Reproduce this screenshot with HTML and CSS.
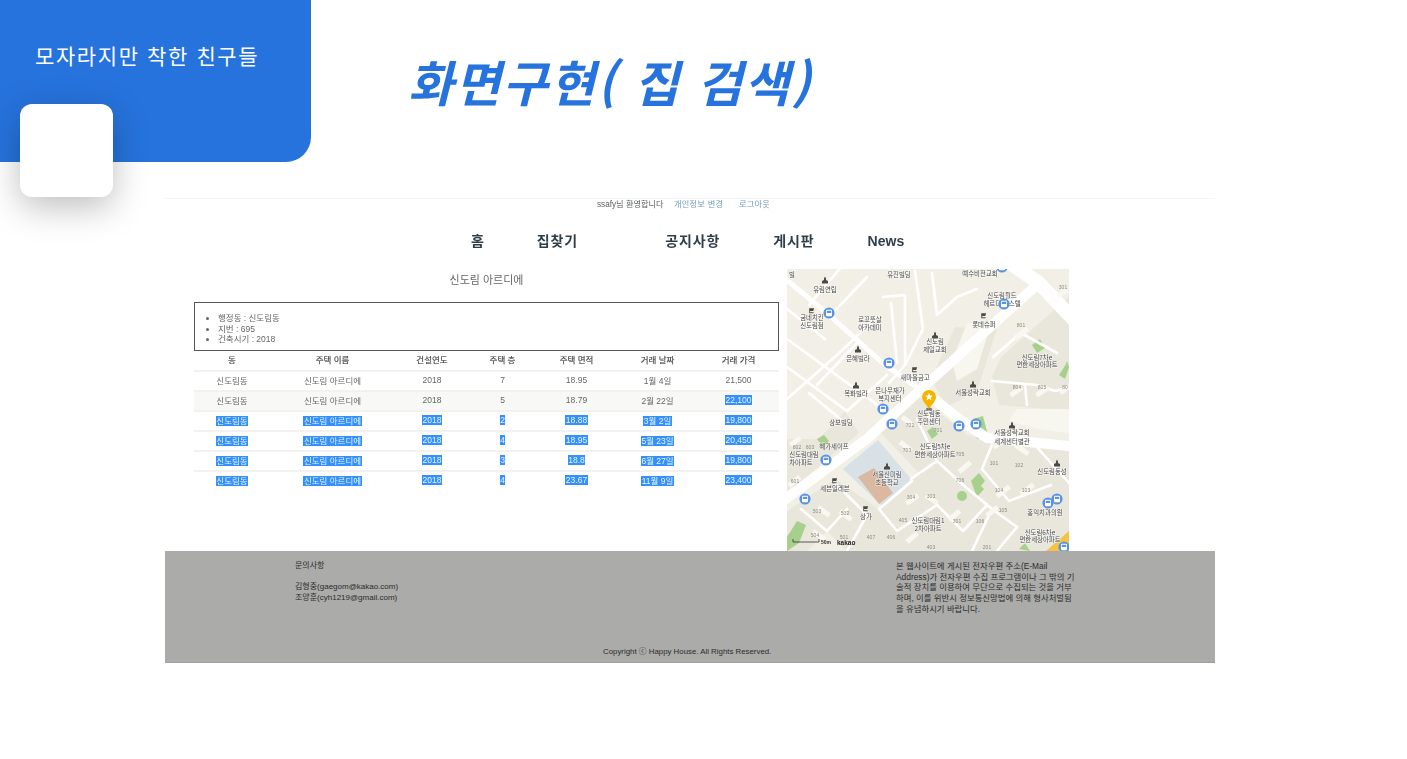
FILE: index.html
```html
<!DOCTYPE html>
<html lang="ko">
<head>
<meta charset="utf-8">
<title>화면구현( 집 검색)</title>
<link rel="stylesheet" href="styles.css">
</head>
<body>
<header class="slide-head">
  <div class="panel">
    <p class="team">모자라지만 착한 친구들</p>
    <div class="card"></div>
  </div>
  <h1 class="slide-title">화면구현( 집 검색)</h1>
</header>
<main class="shot">
  <div class="welcome">
    <span class="who">ssafy님 환영합니다</span>
    <a class="link">개인정보 변경</a>
    <a class="link">로그아웃</a>
  </div>
  <nav class="nav">
    <span class="ko">홈</span><span class="ko wide">집찾기</span><span class="ko">공지사항</span><span class="ko">게시판</span><span>News</span>
  </nav>
  <div class="content">
    <section class="detail">
      <h2 class="apt">신도림 아르디에</h2>
      <div class="info">
        <ul>
          <li>행정동 : 신도림동</li>
          <li>지번 : 695</li>
          <li>건축시기 : 2018</li>
        </ul>
      </div>
      <table class="deals">
        <thead>
          <tr><th>동</th><th>주택 이름</th><th>건설연도</th><th>주택 층</th><th>주택 면적</th><th>거래 날짜</th><th>거래 가격</th></tr>
        </thead>
        <tbody>
          <tr><td>신도림동</td><td>신도림 아르디에</td><td>2018</td><td>7</td><td>18.95</td><td>1월 4일</td><td>21,500</td></tr>
          <tr class="alt"><td>신도림동</td><td>신도림 아르디에</td><td>2018</td><td>5</td><td>18.79</td><td>2월 22일</td><td><mark>22,100</mark></td></tr>
          <tr><td><mark>신도림동</mark></td><td><mark>신도림 아르디에</mark></td><td><mark>2018</mark></td><td><mark>2</mark></td><td><mark>18.88</mark></td><td><mark>3월 2일</mark></td><td><mark>19,800</mark></td></tr>
          <tr><td><mark>신도림동</mark></td><td><mark>신도림 아르디에</mark></td><td><mark>2018</mark></td><td><mark>4</mark></td><td><mark>18.95</mark></td><td><mark>5월 23일</mark></td><td><mark>20,450</mark></td></tr>
          <tr><td><mark>신도림동</mark></td><td><mark>신도림 아르디에</mark></td><td><mark>2018</mark></td><td><mark>3</mark></td><td><mark>18.8</mark></td><td><mark>6월 27일</mark></td><td><mark>19,800</mark></td></tr>
          <tr><td><mark>신도림동</mark></td><td><mark>신도림 아르디에</mark></td><td><mark>2018</mark></td><td><mark>4</mark></td><td><mark>23.67</mark></td><td><mark>11월 9일</mark></td><td><mark>23,400</mark></td></tr>
        </tbody>
      </table>
    </section>
    <svg class="map" viewBox="0 0 282 282" width="282" height="282" xmlns="http://www.w3.org/2000/svg">
      <defs>
        <symbol id="bus" viewBox="0 0 12 12" overflow="visible">
          <circle cx="6" cy="6" r="5.6" fill="#5b93e3"/>
          <rect x="3" y="2.8" width="6" height="6.4" rx="1" fill="#fff"/>
          <rect x="3.8" y="3.8" width="4.4" height="2.2" fill="#5b93e3"/>
        </symbol>
        <symbol id="church" viewBox="0 0 8 8">
          <path d="M4 0.6 L5 2.6 L5 4 L7 5 L7 7.4 L1 7.4 L1 5 L3 4 L3 2.6 Z" fill="#4a4a44"/>
        </symbol>
        <symbol id="cart" viewBox="0 0 8 8">
          <path d="M1 1.5 H7 L6 4.6 H2.4 L2.4 6 H6.4 V7 H1.4 V1.5 Z" fill="#4a4a44"/>
        </symbol>
      </defs>
      <rect class="m-base" width="282" height="282"/>

      <!-- apartment blocks -->
      <path class="m-apt" d="M282 28 L214 88 L205 108 L212 136 L282 142 Z"/>
      <path class="m-apt" d="M160 138 L190 122 L210 60 L168 58 L144 110 Z"/>
      <path class="m-light" d="M165 92 L180 54 L203 58 L190 100 L170 112 Z"/>
      <path class="m-apt" d="M90 160 L130 126 L180 166 L282 176 L282 282 L60 282 L40 262 L20 282 L0 282 L0 242 L48 210 L92 240 L132 204 Z"/>
      <path class="m-apt" d="M0 170 L32 170 L58 142 L72 164 L40 190 L10 216 L0 222 Z"/>
      <path class="m-light" d="M282 140 L230 140 L222 152 L250 160 L282 164 Z"/>

      <!-- school -->
      <path class="m-school" d="M91 171 L124 210 L95 237 L56 200 Z"/>
      <path class="m-field" d="M71 208 L87 199 L106 224 L92 235 Z"/>

      <!-- green -->
      <path class="m-green" d="M186 150 L196 147 L201 166 L190 170 Z"/>
      <path class="m-green" d="M140 162 L146 158 L151 165 L145 170 Z"/>
      <path class="m-green" d="M30 170 L37 166 L42 172 L36 178 Z"/>
      <path class="m-green" d="M184 212 L192 204 L198 212 L194 217 L197 220 L190 228 Z"/>
      <circle class="m-green" cx="175" cy="227" r="5"/>
      <path class="m-green" d="M0 268 L10 252 L19 256 L12 274 L0 282 Z"/>
      <path class="m-green" d="M245 76 L253 70 L258 79 L250 84 Z"/>
      <path class="m-green" d="M280 35 L275 42 L282 48 Z"/>
      <path class="m-green" d="M272 106 C276 100 279 96 280 92 L282 98 L278 110 Z"/>
      <path class="m-green" d="M232 280 L238 274 L243 282 Z"/>
      <path class="m-yellow" d="M282 262 L282 282 L259 282 Z"/>

      <!-- roads -->
      <g class="m-road">
        <path class="r-main" d="M252 14 L131 123 L81 169 L-4 232"/>
        <path class="r-main" d="M138 123 L172 150 L200 169 L282 177"/>
        <path class="r-wide" d="M226 -4 L252 14 L286 50"/>
        <path class="r-mid" d="M-4 8 L42 46 L98 96 L138 124"/>
        <path class="r-thin" d="M0 98 L60 142"/>
        <path class="r-thin" d="M0 70 L96 140"/>
        <path class="r-thin" d="M0 40 L38 70"/>
        <path class="r-thin" d="M56 -4 L22 36"/>
        <path class="r-thin" d="M96 28 L118 26 L118 96"/>
        <path class="r-thin" d="M104 34 L110 94"/>
        <path class="r-thin" d="M128 2 L136 60 L118 96 L102 114"/>
        <path class="r-thin" d="M44 46 L80 8"/>
        <path class="r-thin" d="M50 86 L88 50"/>
        <path class="r-thin" d="M30 116 L70 74"/>
        <path class="r-thin" d="M0 130 L50 86"/>
        <path class="r-thin" d="M60 142 L100 106"/>
        <path class="r-thin" d="M22 124 L58 154"/>
        <path class="r-thin" d="M145 4 L150 46 L170 28 L190 20"/>
        <path class="r-thin" d="M206 88 L234 64 L270 84"/>
        <path class="r-thin" d="M205 112 L250 116 L268 122 L282 118"/>
        <path class="r-thin" d="M238 116 L240 136"/>
        <path class="r-thin" d="M124 210 L150 192 L175 215 L205 240 L230 258"/>
        <path class="r-thin" d="M205 176 L195 200 L222 232 L264 216"/>
        <path class="r-thin" d="M248 176 L282 214"/>
        <path class="r-thin" d="M48 214 L80 246 L60 282"/>
        <path class="r-thin" d="M125 212 L92 240 L110 262 L150 236 L176 262 L200 236"/>
        <path class="r-thin" d="M205 240 L185 282"/>
        <path class="r-thin" d="M230 258 L210 282"/>
        <path class="r-thin" d="M14 240 L40 262 L60 240"/>
        <path class="r-thin" d="M150 192 L130 150"/>
      </g>

      <!-- apartment buildings -->
      <g class="m-bld">
        <rect x="270" y="22" width="11" height="5" transform="rotate(-35 275 24)"/>
        <rect x="226" y="62" width="16" height="5" transform="rotate(-38 234 64)"/>
        <rect x="222" y="120" width="14" height="5" transform="rotate(-35 229 122)"/>
        <rect x="248" y="120" width="14" height="5" transform="rotate(-35 255 122)"/>
        <rect x="272" y="118" width="12" height="5" transform="rotate(-35 278 120)"/>
        <rect x="114" y="150" width="14" height="5" transform="rotate(38 121 152)"/>
        <rect x="140" y="148" width="14" height="5" transform="rotate(38 147 150)"/>
        <rect x="112" y="175" width="14" height="5" transform="rotate(38 119 177)"/>
        <rect x="205" y="172" width="15" height="5" transform="rotate(-35 212 174)"/>
        <rect x="228" y="178" width="15" height="5" transform="rotate(35 235 180)"/>
        <rect x="170" y="196" width="15" height="5" transform="rotate(-40 177 198)"/>
        <rect x="208" y="220" width="16" height="5" transform="rotate(-38 216 222)"/>
        <rect x="232" y="218" width="16" height="5" transform="rotate(-38 240 220)"/>
        <rect x="118" y="228" width="14" height="5" transform="rotate(-35 125 230)"/>
        <rect x="138" y="228" width="14" height="5" transform="rotate(35 145 230)"/>
        <rect x="160" y="244" width="14" height="5" transform="rotate(-38 167 246)"/>
        <rect x="198" y="240" width="14" height="5" transform="rotate(-38 205 242)"/>
        <rect x="30" y="240" width="14" height="5" transform="rotate(35 37 242)"/>
        <rect x="52" y="244" width="14" height="5" transform="rotate(35 59 246)"/>
        <rect x="25" y="264" width="14" height="5" transform="rotate(35 32 266)"/>
        <rect x="118" y="266" width="14" height="5" transform="rotate(-40 125 268)"/>
        <rect x="2" y="170" width="12" height="5" transform="rotate(-35 8 172)"/>
        <rect x="0" y="210" width="14" height="5" transform="rotate(-38 7 212)"/>
      </g>

      <!-- POI icons -->
      <use href="#church" x="34" y="7" width="8" height="8"/>
      <use href="#church" x="144" y="62" width="8" height="8"/>
      <use href="#church" x="67" y="76" width="8" height="8"/>
      <use href="#church" x="65" y="112" width="8" height="8"/>
      <use href="#church" x="182" y="111" width="8" height="8"/>
      <use href="#church" x="221" y="152" width="8" height="8"/>
      <use href="#church" x="96" y="193" width="8" height="8"/>
      <use href="#church" x="266" y="190" width="8" height="8"/>
      <use href="#cart" x="193" y="43" width="7" height="7"/>
      <use href="#cart" x="44" y="208" width="7" height="7"/>
      <use href="#cart" x="75" y="236" width="7" height="7"/>
      <use href="#cart" x="21" y="38" width="7" height="7"/>
      <use href="#cart" x="124" y="97" width="7" height="7"/>

      <!-- labels -->
      <g class="m-label">
        <text x="112" y="8">유진빌딩</text>
        <text x="193" y="7">예수비전교회</text>
        <text x="5" y="8">빌</text>
        <text x="38" y="23">유림연립</text>
        <text x="25" y="51">굼네치킨</text><text x="25" y="59">신도림점</text>
        <text x="83" y="53">로꼬뜻살</text><text x="83" y="61">아카데미</text>
        <text x="215" y="29">신도림월드</text><text x="215" y="37">헤르디 피스텔</text>
        <text x="197" y="58">롯데슈퍼</text>
        <text x="148" y="75">신도림</text><text x="148" y="83">제일교회</text>
        <text x="71" y="92">은혜빌라</text>
        <text x="128" y="111">새마을금고</text>
        <text x="69" y="127">목화빌라</text>
        <text x="103" y="124">은나무재가</text><text x="103" y="132">복지센터</text>
        <text x="186" y="126">서울성락교회</text>
        <text x="250" y="91">신도림7차e</text><text x="250" y="98">편한세상아파트</text>
        <text x="54" y="156">상보빌딩</text>
        <text x="142" y="147">신도림동</text><text x="142" y="155">주민센터</text>
        <text x="225" y="166">서울성락교회</text><text x="225" y="175">세계센터별관</text>
        <text x="47" y="180">혜가세이프</text>
        <text x="148" y="180">신도림5차e</text><text x="148" y="188">편한세상아파트</text>
        <text x="17" y="188">신도림대림</text><text x="14" y="196">차아파트</text>
        <text class="m-school-t" x="100" y="208">서울신미림</text><text class="m-school-t" x="100" y="216">초등학교</text>
        <text x="48" y="222">세븐일레븐</text>
        <text x="79" y="250">상가</text>
        <text x="265" y="205">신도림동성</text>
        <text x="258" y="246">홍익치과의원</text>
        <text x="141" y="254">신도림대림1</text><text x="141" y="262">2차아파트</text>
        <text x="253" y="266">신도림6차e</text><text x="253" y="273">편한세상아파트</text>
      </g>
      <g class="m-num">
        <text x="234" y="58">801</text><text x="276" y="20">301</text>
        <text x="230" y="120">804</text><text x="255" y="120">805</text><text x="278" y="120">80</text>
        <text x="123" y="158">702</text><text x="151" y="163">701</text><text x="120" y="183">703</text><text x="173" y="187">705</text>
        <text x="10" y="180">602</text><text x="23" y="180">603</text><text x="8" y="214">601</text>
        <text x="173" y="213">706</text>
        <text x="207" y="196">101</text><text x="232" y="198">102</text>
        <text x="212" y="223">104</text><text x="239" y="223">103</text><text x="216" y="243">105</text>
        <text x="124" y="230">304</text><text x="144" y="229">303</text>
        <text x="116" y="253">405</text><text x="170" y="254">301</text><text x="193" y="254">106</text>
        <text x="30" y="244">503</text><text x="58" y="246">502</text>
        <text x="28" y="268">504</text><text x="57" y="270">501</text><text x="84" y="270">407</text><text x="104" y="270">406</text>
        <text x="144" y="280">403</text><text x="200" y="280">201</text>
      </g>

      <!-- bus stops -->
      <use href="#bus" x="36" y="38" width="12" height="12"/>
      <use href="#bus" x="211" y="29" width="12" height="12"/>
      <use href="#bus" x="96" y="88" width="12" height="12"/>
      <use href="#bus" x="90" y="134" width="12" height="12"/>
      <use href="#bus" x="99" y="149" width="12" height="12"/>
      <use href="#bus" x="166" y="151" width="12" height="12"/>
      <use href="#bus" x="183" y="149" width="12" height="12"/>
      <use href="#bus" x="33" y="185" width="12" height="12"/>
      <use href="#bus" x="12" y="224" width="12" height="12"/>
      <use href="#bus" x="255" y="228" width="12" height="12"/>
      <use href="#bus" x="264" y="224" width="12" height="12"/>
      <use href="#bus" x="271" y="272" width="12" height="12"/>
      <use href="#bus" x="209" y="-8" width="12" height="12"/>

      <!-- marker -->
      <ellipse cx="142" cy="140" rx="3" ry="1.6" fill="#777"/>
      <path class="m-pin" d="M142 140 C139 135 135 132 135 128 A7 7 0 0 1 149 128 C149 132 145 135 142 140 Z"/>
      <path fill="#fff" d="M142 124 L143.1 126.6 L145.8 126.8 L143.7 128.6 L144.4 131.2 L142 129.8 L139.6 131.2 L140.3 128.6 L138.2 126.8 L140.9 126.6 Z"/>

      <!-- scale -->
      <path class="m-scale" d="M6 270 V273 H32 V270"/>
      <text class="m-scale-t" x="34" y="275">50m</text>
      <text class="m-logo" x="50" y="276">kakao</text>
    </svg>
  </div>
  <footer class="foot">
    <div class="foot-cols">
      <div class="contact">문의사항<br><br>김형중(gaegom@kakao.com)<br>조양훈(cyh1219@gmail.com)</div>
      <div class="notice">본 웹사이트에 게시된 전자우편 주소(E-Mail<br>Address)가 전자우편 수집 프로그램이나 그 밖의 기<br>술적 장치를 이용하여 무단으로 수집되는 것을 거부<br>하며, 이를 위반시 정보통신망법에 의해 형사처벌됨<br>을 유념하시기 바랍니다.</div>
    </div>
    <p class="copy">Copyright ⓒ Happy House. All Rights Reserved.</p>
  </footer>
</main>
</body>
</html>
```

FILE: styles.css
```css
* { box-sizing: border-box; }

html, body {
  margin: 0;
  height: 759px;
  overflow: hidden;
  background: #fff;
  font-family: "Liberation Sans", "Noto Sans CJK KR", sans-serif;
}

.slide-head {
  display: flex;
  height: 198px;
  align-items: flex-start;
}

.panel {
  position: relative;
  flex: none;
  width: 311px;
  height: 162px;
  padding: 40px 0 0 35px;
  background: #2673dd;
  border-bottom-right-radius: 25px;
}

.team {
  margin: 0;
  color: #fff;
  font-size: 21px;
  line-height: 30px;
  letter-spacing: 1.6px;
  font-family: "Noto Sans CJK KR", sans-serif;
  font-weight: 400;
  white-space: nowrap;
}

.card {
  position: absolute;
  left: 20px;
  top: 104px;
  width: 93px;
  height: 93px;
  background: #fff;
  border-radius: 12px;
  box-shadow: 0 10px 35px rgba(0, 0, 0, 0.26);
}

.slide-title {
  margin: 46px 0 0 97px;
  color: #2673dd;
  font-family: "Noto Sans CJK KR", sans-serif;
  font-size: 49px;
  line-height: 70px;
  letter-spacing: 2.2px;
  font-style: italic;
  font-weight: 700;
  white-space: nowrap;
}

.shot {
  width: 1050px;
  height: 465px;
  margin-left: 165px;
  border-top: 1px solid #f4f4f4;
  filter: blur(0.35px);
  display: flex;
  flex-direction: column;
}

.welcome {
  display: flex;
  height: 13px;
  padding-left: 432px;
  font-size: 8.2px;
  line-height: 12px;
  color: #5c6063;
  white-space: nowrap;
}
.welcome .who { width: 77px; }
.welcome .link { color: #6f9db8; letter-spacing: 0.25px; width: 65px; }

.nav {
  display: flex;
  gap: 53px;
  height: 57px;
  padding: 19px 0 0 306px;
  font-size: 14px;
  line-height: 20px;
  font-weight: 700;
  color: #2f3e48;
  white-space: nowrap;
}
.nav .ko { letter-spacing: 0.9px; }
.nav .ko:first-child { margin-right: -1px; }
.nav .wide { margin-right: 34px; }

.content {
  display: flex;
  height: 282px;
  padding-left: 29px;
  gap: 8px;
}

.detail { width: 585px; flex: none; }

.apt {
  margin: 0;
  height: 33px;
  padding-top: 3px;
  text-align: center;
  font-size: 11px;
  line-height: 16px;
  font-weight: 400;
  color: #666;
}

.info {
  height: 49px;
  border: 1px solid #555;
  padding: 10px 0 0 23px;
  font-size: 8.5px;
  line-height: 10.7px;
  color: #666;
}
.info ul { margin: 0; padding: 0; }

.deals {
  width: 585px;
  border-collapse: collapse;
  table-layout: fixed;
  font-size: 8.5px;
  color: #666;
}
.deals th {
  height: 20px;
  font-weight: 400;
  color: #444;
  -webkit-text-stroke: 0.15px #444;
  border-bottom: 2px solid #f2f2f0;
  text-align: center;
  padding: 0 0 3px;
}
.deals td {
  height: 20px;
  text-align: center;
  padding: 0 0 2px;
  border-bottom: 2px solid #f2f2f0;
}
.deals tbody tr:last-child td { border-bottom: 0; padding-bottom: 4px; }
.deals th:nth-child(1) { width: 76px; }
.deals th:nth-child(2) { width: 125px; }
.deals th:nth-child(3) { width: 74px; }
.deals th:nth-child(4) { width: 67px; }
.deals th:nth-child(5) { width: 81px; }
.deals th:nth-child(6) { width: 81px; }
.deals th:nth-child(7) { width: 81px; }
.deals .alt { background: #f8f8f6; }
.deals mark {
  background: #3390ff;
  color: #eaf3ff;
  padding: 0 0.5px;
}

.map { flex: none; display: block; overflow: hidden; }
.m-base { fill: #f2f0e6; }
.m-apt { fill: #e9e7dc; }
.m-light { fill: #f7f6ef; }
.m-school { fill: #d8e1e6; }
.m-field { fill: #dbb9a0; }
.m-green { fill: #a8d08d; }
.m-yellow { fill: #f5c242; }
.m-road path { fill: none; stroke: #fff; stroke-linecap: round; stroke-linejoin: round; }
.m-road .r-wide { stroke-width: 14; }
.m-road .r-main { stroke-width: 10; }
.m-road .r-mid { stroke-width: 5; }
.m-road .r-thin { stroke-width: 2.6; }
.m-bld rect { fill: #f8f7f1; }
.m-label text {
  font-family: "Noto Sans CJK KR", sans-serif;
  font-size: 6.4px;
  fill: #444;
  text-anchor: middle;
  paint-order: stroke;
  stroke: rgba(255, 255, 255, 0.7);
  stroke-width: 1px;
}
.m-num text {
  font-family: "Liberation Sans", sans-serif;
  font-size: 5px;
  fill: #8d8b7e;
  text-anchor: middle;
}
.m-pin { fill: #f5b400; }
.m-scale { fill: none; stroke: #333; stroke-width: 0.8; }
.m-scale-t { font-family: "Liberation Sans", sans-serif; font-size: 5px; font-weight: 700; fill: #333; }
.m-logo { font-family: "Liberation Sans", sans-serif; font-size: 6.5px; font-weight: 700; fill: #222; }

.foot {
  height: 112px;
  flex: none;
  background: #ababa9;
  border-bottom: 1px solid #a0a09e;
  padding: 10px 0 0 130px;
  color: #2b2b2b;
  font-size: 8px;
  line-height: 10.7px;
}
.foot-cols {
  display: flex;
  height: 86px;
}
.contact { width: 601px; white-space: nowrap; }
.notice { width: 182px; font-size: 8.4px; white-space: nowrap; }
.copy {
  margin: 0 0 0 308px;
  font-size: 7.85px;
  white-space: nowrap;
}
```
